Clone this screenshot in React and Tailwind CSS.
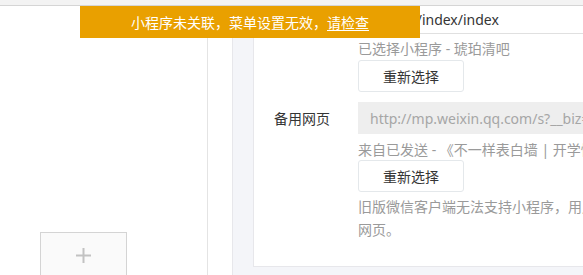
export default function App() {
  const font = { fontFamily: '"Noto Sans", "Noto Sans CJK SC", sans-serif' };
  return (
    <div className="relative w-[583px] h-[275px] overflow-hidden bg-white text-[14px]" style={font}>
      <div className="h-[6px] bg-[#f3f3f3] border-b border-[#d5d5d5]" />
      <div className="flex h-[269px]">
        <div className="w-[208px] shrink-0 border-r border-[#e4e4e4] bg-white pt-[226px] pl-[40px]">
          <div className="w-[87px] h-[60px] border border-[#d4d4d4] bg-[#fafafa] flex justify-center pt-[15px]">
            <svg width="15" height="15" viewBox="0 0 15 15">
              <rect x="0" y="6.5" width="15" height="2" fill="#c2c2c2" />
              <rect x="6.5" y="0" width="2" height="15" fill="#c2c2c2" />
            </svg>
          </div>
        </div>
        <div className="w-[24px] shrink-0 bg-white" />
        <div className="flex-1 bg-[#f4f5f9] border-l border-[#e7e7eb] pl-[20px] min-w-0">
          <div className="h-[261px] bg-white border-l border-b border-[#e7e7eb] overflow-hidden">
            <div className="flex">
              <div className="w-[104px] shrink-0 pl-[20px] h-[28px] flex items-center text-[#353535]">小程序路径</div>
              <div className="flex-1 min-w-0">
                <div className="h-[28px] border-l border-b border-[#e0e0e0] pl-[18px] flex items-center text-[#353535] whitespace-nowrap">
                  pages/index/index
                </div>
                <div className="mt-[5px] leading-[20px] text-[#9a9a9a] whitespace-nowrap">已选择小程序 - 琥珀清吧</div>
                <button className="mt-[1px] w-[106px] h-[32px] border border-[#e4e8eb] rounded-[3px] bg-white text-[#353535] flex items-center justify-center">
                  重新选择
                </button>
              </div>
            </div>
            <div className="flex mt-[10px]">
              <div className="w-[104px] shrink-0 pl-[20px] h-[32px] flex items-center text-[#353535]">备用网页</div>
              <div className="flex-1 min-w-0">
                <div className="h-[32px] bg-[#eeeeee] pl-[12px] flex items-center text-[#a6a6a6] whitespace-nowrap overflow-hidden">
                  http://mp.weixin.qq.com/s?__biz=MzI4NjQ2MDA5Mw==
                </div>
                <div className="mt-[6px] leading-[20px] text-[#9a9a9a] whitespace-nowrap">来自已发送 - 《不一样表白墙 | 开学快乐》</div>
                <button className="w-[106px] h-[32px] border border-[#e4e8eb] rounded-[3px] bg-white text-[#353535] flex items-center justify-center">
                  重新选择
                </button>
                <div className="mt-[3px] leading-[23px] text-[#9a9a9a] whitespace-nowrap">
                  旧版微信客户端无法支持小程序，用户点击菜单时将会打开备用
                  <br />
                  网页。
                </div>
              </div>
            </div>
          </div>
        </div>
      </div>
      <div className="absolute left-[80px] top-[6px] w-[340px] h-[32px] bg-[#e9a000] flex items-center justify-center text-white text-[14px]">
        <span>
          小程序未关联，菜单设置无效，<span className="underline underline-offset-2">请检查</span>
        </span>
      </div>
    </div>
  );
}
